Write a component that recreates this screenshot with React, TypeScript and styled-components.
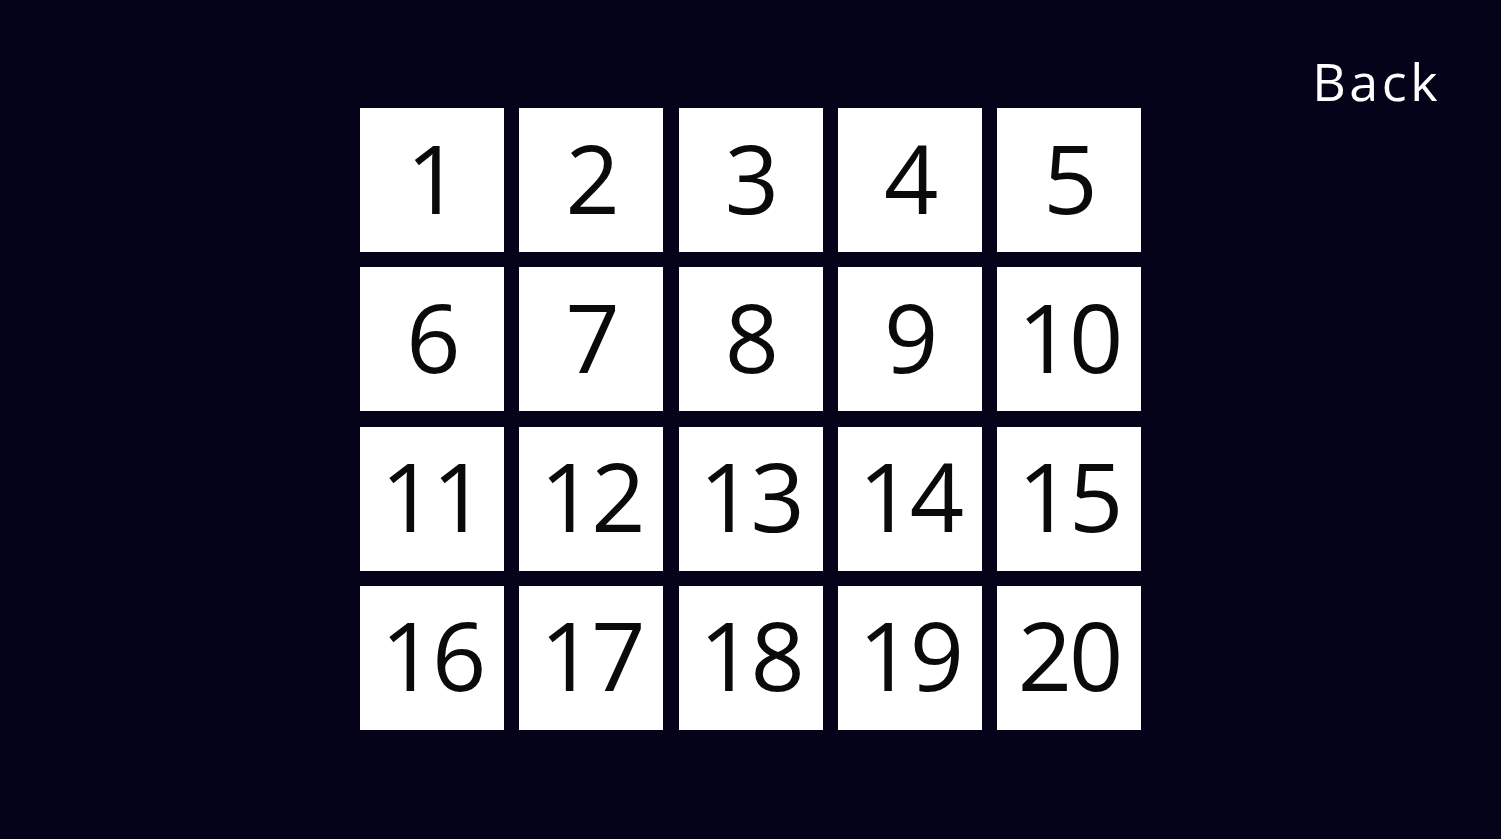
import React from "react";
import styled, { createGlobalStyle } from "styled-components";

const GlobalStyle = createGlobalStyle`
  html, body {
    margin: 0;
    padding: 0;
    background: #05031a;
  }
  * {
    box-sizing: border-box;
  }
`;

const levels = Array.from({ length: 20 }, (_, i) => i + 1);

export default function App() {
  return (
    <>
      <GlobalStyle />
      <Page>
        <Header>
          <BackLink href="#">Back</BackLink>
        </Header>
        <Board>
          {levels.map(n => (
            <Tile key={n}>{n}</Tile>
          ))}
        </Board>
      </Page>
    </>
  );
}

const Page = styled.div`
  display: flex;
  flex-direction: column;
  width: 100%;
  height: 100vh;
  background: #05031a;
  font-family: "Open Sans", "DejaVu Sans", sans-serif;
  overflow: hidden;
`;

const Header = styled.header`
  display: flex;
  justify-content: flex-end;
  height: 108px;
  padding: 55px 60px 0 0;
`;

const BackLink = styled.a`
  color: #ffffff;
  font-size: 52px;
  font-weight: 400;
  line-height: 1;
  text-decoration: none;
  letter-spacing: 3.5px;
`;

const Board = styled.main`
  display: grid;
  grid-template-columns: repeat(5, 144px);
  grid-auto-rows: 144px;
  column-gap: 15.25px;
  row-gap: 15.25px;
  justify-content: center;
`;

const Tile = styled.button`
  display: flex;
  align-items: center;
  justify-content: center;
  border: none;
  padding: 0 0 6px 0;
  margin: 0;
  background: #ffffff;
  color: #0a0a0a;
  font-family: inherit;
  font-size: 95px;
  font-weight: 400;
  line-height: 1;
  letter-spacing: -3px;
  cursor: pointer;
`;
